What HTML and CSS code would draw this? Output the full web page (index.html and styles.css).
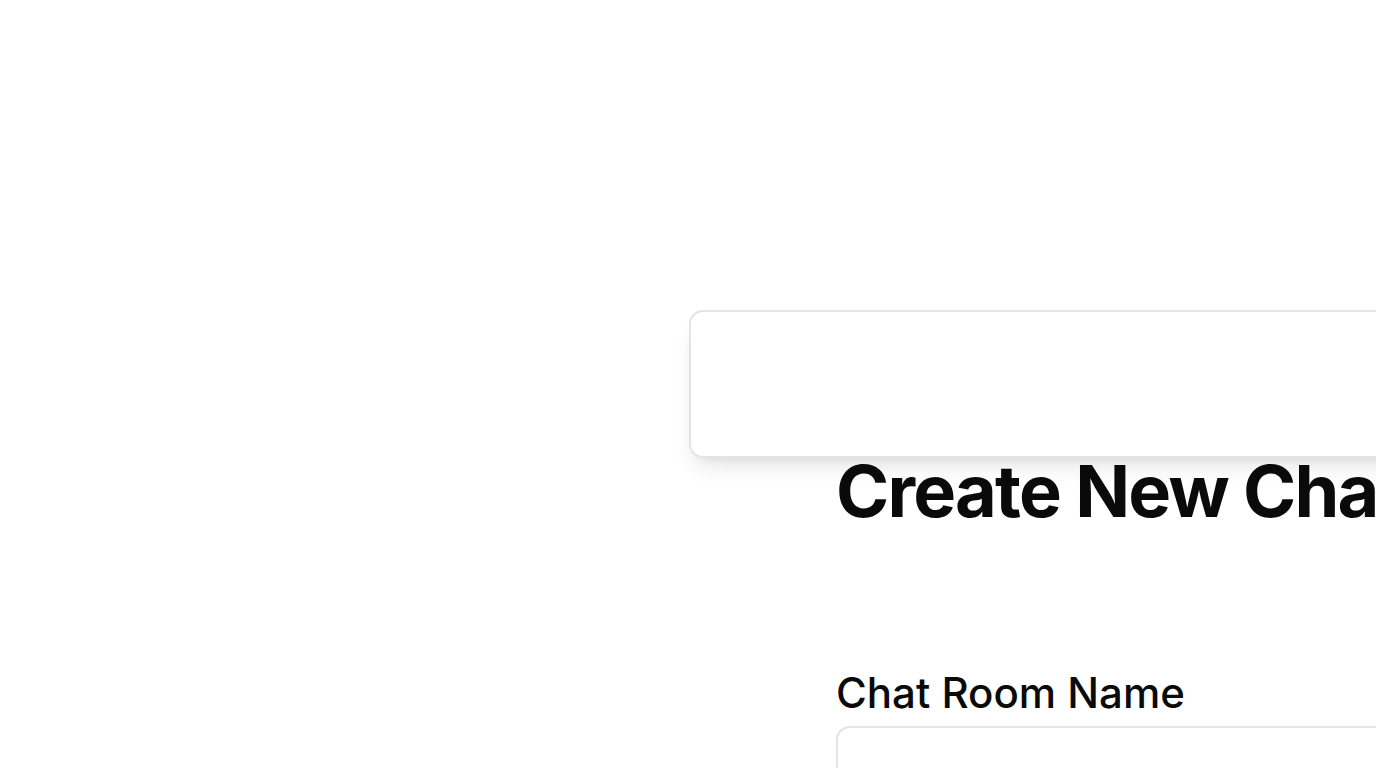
FILE: index.html
```html
<!DOCTYPE html>
<html lang="en">
<head>
<meta charset="utf-8">
<title>Create New Chat Room</title>
<link rel="stylesheet" href="styles.css">
</head>
<body>
<main class="page">
  <div class="card"></div>
  <section class="form">
    <h1 class="title">Create New Chat Room</h1>
    <label class="label" for="room">Chat Room Name</label>
    <input class="input" id="room" type="text">
  </section>
</main>
</body>
</html>
```
FILE: styles.css
```css
html, body {
  margin: 0;
  height: 100%;
  overflow: hidden;
  background: #ffffff;
}
body {
  font-family: Inter, "Noto Sans", sans-serif;
  color: #0a0a0a;
}
.page {
  padding: 310px 0 0 689px;
  width: 1600px;
}
.card {
  box-sizing: border-box;
  height: 148px;
  width: 1200px;
  border: 2px solid #e4e4e4;
  border-radius: 14px;
  background: #fff;
  box-shadow: 0 14px 24px -8px rgba(0, 0, 0, 0.12), 0 6px 10px -6px rgba(0, 0, 0, 0.08);
}
.form {
  margin-left: 147px;
  display: flex;
  flex-direction: column;
  align-items: flex-start;
}
.title {
  margin: -3px 0 0 0;
  font-size: 72px;
  font-weight: 700;
  line-height: 72px;
  letter-spacing: -1.8px;
  white-space: nowrap;
}
.label {
  margin-top: 136px;
  font-size: 42px;
  font-weight: 500;
  line-height: 60px;
}
.input {
  box-sizing: border-box;
  margin-top: 3px;
  width: 1000px;
  height: 90px;
  border: 2px solid #e4e4e4;
  border-radius: 14px;
  background: #fff;
  outline: none;
}
```
